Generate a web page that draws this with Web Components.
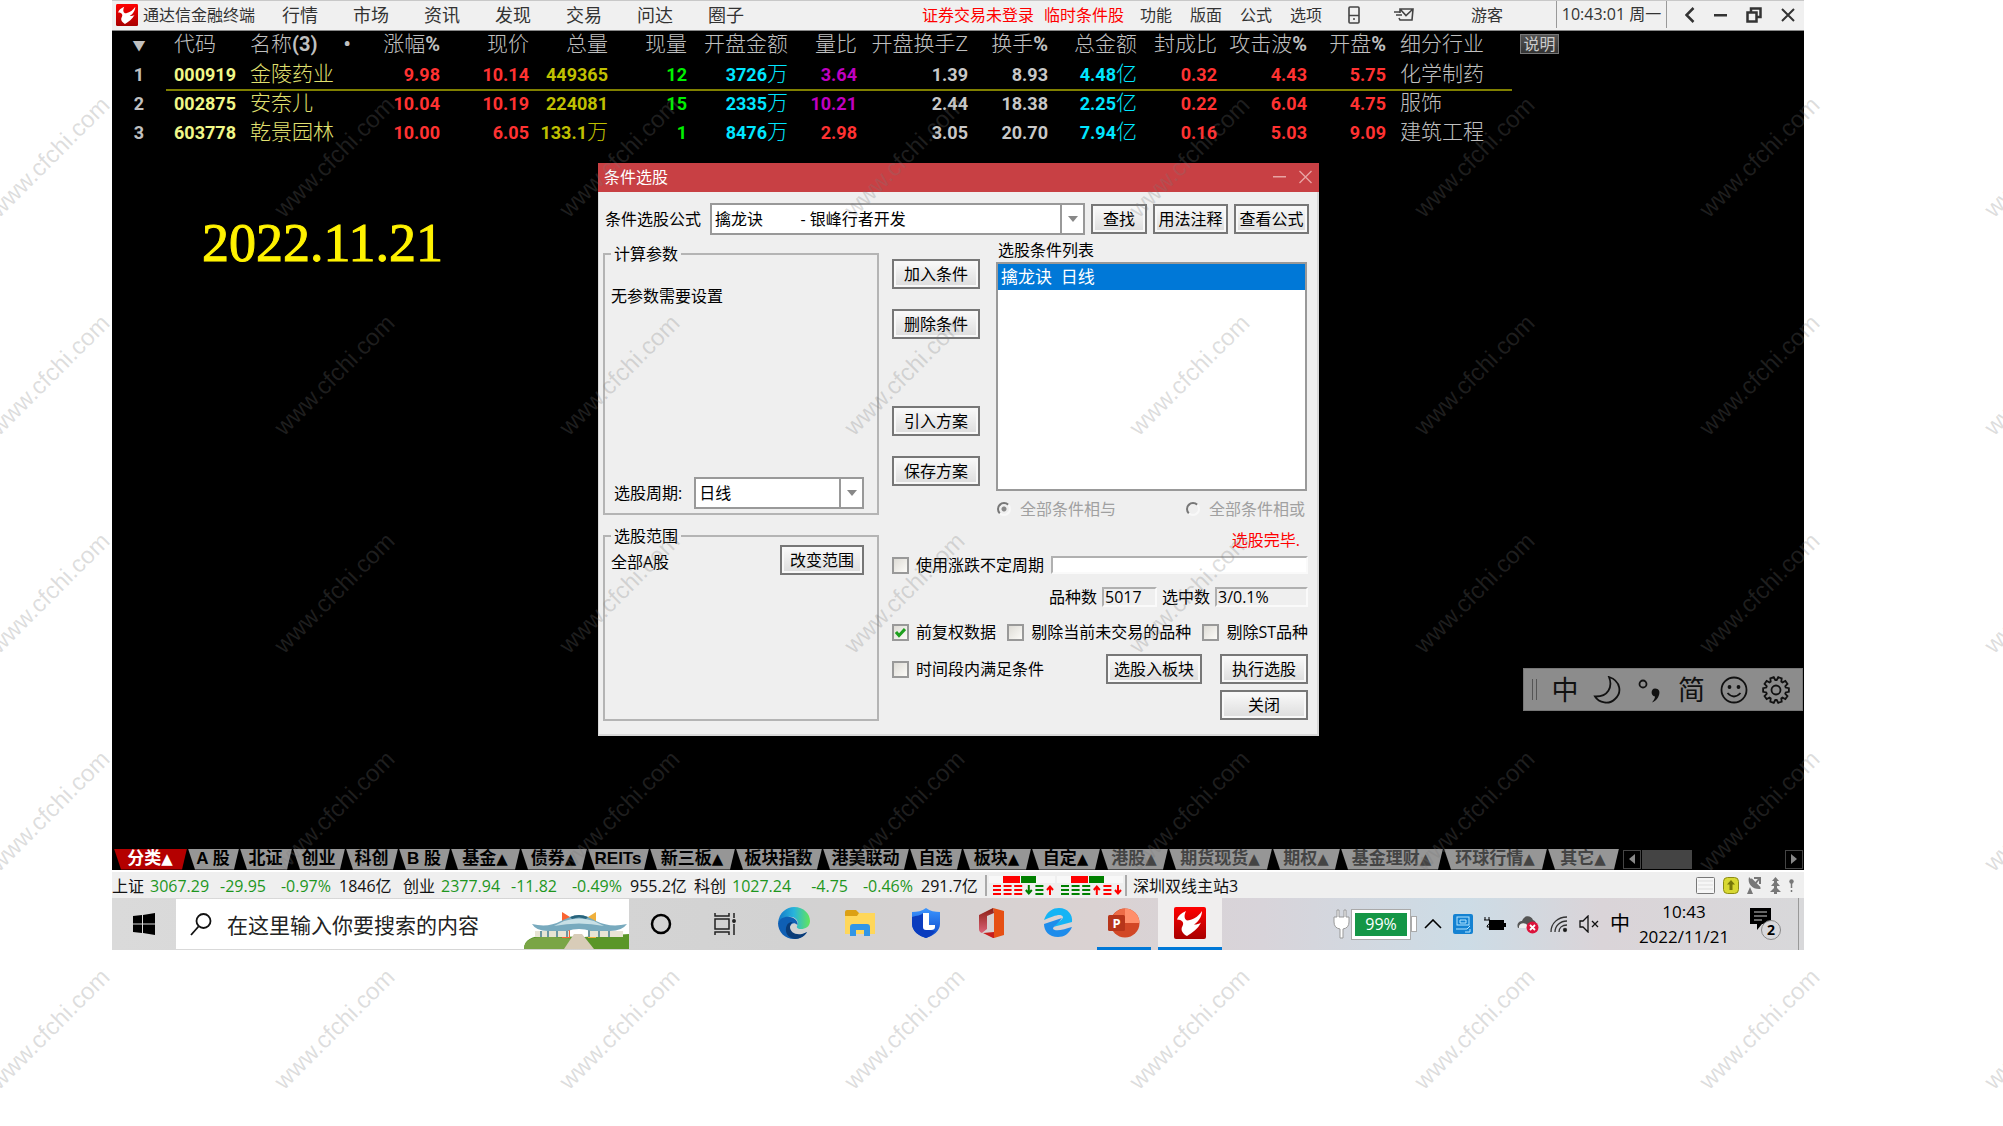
<!DOCTYPE html>
<html lang="zh-CN">
<head>
<meta charset="utf-8">
<title>通达信金融终端</title>
<style>
    html, body {
        margin: 0;
        background: #fff;
    }

    body {
        --ui: "Open Sans", "Noto Sans CJK SC", sans-serif;
        --num: Roboto, "Noto Sans CJK SC", sans-serif;
        position: relative;
        min-height: 100vh;
        overflow: hidden;
        font: 16px/20px var(--ui);
        color: #111;
    }
</style>
</head>
<body>
<desk-top>
    <app-menu></app-menu>
    <work-area>
        <quote-table></quote-table>
        <date-note>2022.11.21</date-note>
        <pick-dialog></pick-dialog>
        <ime-bar></ime-bar>
    </work-area>
    <sector-tabs></sector-tabs>
    <index-bar></index-bar>
    <task-bar></task-bar>
</desk-top>
<water-mark text="www.cfchi.com"></water-mark>

<script>
const logo = `
    <svg viewBox="0 0 32 32">
        <defs><linearGradient id="r" x2="0" y2="1"><stop stop-color="#f00"/><stop offset="1" stop-color="#a80000"/></linearGradient></defs>
        <rect width="32" height="32" rx="2" fill="url(#r)"/>
        <path d="M3 12.500C4 9 7 6 12 4C10 8 10 12 13 13.500C18 13.500 24 10 28 4C28 10 24 15 20 17.500C23 17.500 25 17 27 15.500C24 22 18 26 13 29C9 27 6 23 8.500 19C10.500 15.500 8 12.500 3 12.500Z" fill="#fff"/>
    </svg>`;

class DeskTop extends HTMLElement {
    constructor() {
        super();
        this.attachShadow({ mode: 'open' });
        this.shadowRoot.innerHTML = `
            <style>
                :host {
                    display: flex;
                    flex-direction: column;
                    height: 950px;
                    margin: 0 199px 0 112px;
                    background: #000;
                }
            </style>
            <slot></slot>
        `;
    }
}

class WorkArea extends HTMLElement {
    constructor() {
        super();
        this.attachShadow({ mode: 'open' });
        this.shadowRoot.innerHTML = `
            <style>
                :host {
                    display: block;
                    position: relative;
                    flex: 1;
                    background: #000;
                }
                ::slotted(date-note) { position: absolute; left: 90px; top: 185px; }
                ::slotted(pick-dialog) { position: absolute; left: 486px; top: 132px; }
                ::slotted(ime-bar) { position: absolute; right: 1px; top: 637px; }
            </style>
            <slot></slot>
        `;
    }
}

class DateNote extends HTMLElement {
    constructor() {
        super();
        this.attachShadow({ mode: 'open' });
        this.shadowRoot.innerHTML = `
            <style>
                :host {
                    display: block;
                    font: 54px/54px "Liberation Serif", serif;
                    color: #fff200;
                    -webkit-text-stroke: 1px #fff200;
                }
            </style>
            <slot></slot>
        `;
    }
}

class AppMenu extends HTMLElement {
    constructor() {
        super();
        this.attachShadow({ mode: 'open' });
    }

    connectedCallback() {
        const menus = ['行情', '市场', '资讯', '发现', '交易', '问达', '圈子'];
        const tools = ['功能', '版面', '公式', '选项'];

        this.shadowRoot.innerHTML = `
            <style>
                :host {
                    display: flex;
                    align-items: center;
                    box-sizing: border-box;
                    height: 31px;
                    padding-bottom: 2px;
                    border-top: 1px solid #c8c8c8;
                    border-bottom: 1px solid #888;
                    background: #f0f0f0;
                    color: #333;
                    white-space: nowrap;
                }
                button {
                    padding: 0;
                    border: 0;
                    background: none;
                    font: inherit;
                    color: inherit;
                }
                svg { display: block; }
                .brand { display: flex; align-items: center; gap: 5px; margin-left: 4px; }
                .brand svg { width: 22px; height: 22px; }
                .menus { display: flex; gap: 35px; margin-left: 27px; font-size: 18px; }
                .right { display: flex; align-items: center; margin-left: auto; }
                .red { color: #f00; margin-right: 10px; }
                .tools { display: flex; gap: 18px; margin: 0 26px 0 6px; }
                .guest { margin: 0 53px 0 57px; }
                .clock {
                    width: 109px;
                    height: 27px;
                    line-height: 27px;
                    text-align: center;
                    border: solid #999;
                    border-width: 0 1px;
                }
                .win { display: flex; align-items: center; gap: 19px; margin: 0 9px 0 18px; }
            </style>
            <div class="brand">${logo}<span>通达信金融终端</span></div>
            <nav class="menus">${menus.map(m => `<button>${m}</button>`).join('')}</nav>
            <div class="right">
                <button class="red">证券交易未登录</button>
                <button class="red">临时条件股</button>
                <div class="tools">${tools.map(t => `<button>${t}</button>`).join('')}</div>
                <button aria-label="手机"><svg width="12" height="18" viewBox="0 0 12 18" fill="none" stroke="#444" stroke-width="1.600"><rect x="1" y="1" width="10" height="16" rx="1"/><path d="M1 9.500H11M5 13H7"/></svg></button>
                <button aria-label="邮件" style="margin-left: 34px"><svg width="20" height="14" viewBox="0 0 20 14" fill="none" stroke="#444" stroke-width="1.600"><path d="M6 5V1H19L18 12H6L5 10M6 1 12 7.500 19 1M0 4H6M2 7H8"/></svg></button>
                <button class="guest">游客</button>
                <div class="clock">10:43:01 周一</div>
                <div class="win">
                    <button aria-label="返回"><svg width="10" height="16" viewBox="0 0 10 16" fill="none" stroke="#333" stroke-width="2.500"><path d="M8.500 1 1.500 8 8.500 15"/></svg></button>
                    <button aria-label="最小化"><svg width="13" height="16" viewBox="0 0 13 16"><path d="M0 7H13V9.500H0Z" fill="#333"/></svg></button>
                    <button aria-label="还原"><svg width="16" height="16" viewBox="0 0 16 16" fill="none" stroke="#333" stroke-width="2.500"><path d="M5 5V1.500H14.500V10H11M1.500 5.500H10.500V14.500H1.500Z"/></svg></button>
                    <button aria-label="关闭"><svg width="14" height="16" viewBox="0 0 14 16" fill="none" stroke="#333" stroke-width="2"><path d="M1 2 13 14M13 2 1 14"/></svg></button>
                </div>
            </div>
        `;
    }
}

const quoteCols = [
    { head: '<span class="arrow">▼</span>', w: 54, cls: 'idx' },
    { head: '代码', w: 76, cls: 'code' },
    { head: '名称<b>(3)</b><b class="dot">•</b>', w: 118, cls: 'name' },
    { head: '涨幅<b>%</b>', w: 80 },
    { head: '现价', w: 89 },
    { head: '总量', w: 79 },
    { head: '现量', w: 79 },
    { head: '开盘金额', w: 101 },
    { head: '量比', w: 69 },
    { head: '开盘换手Z', w: 111 },
    { head: '换手<b>%</b>', w: 80 },
    { head: '总金额', w: 89 },
    { head: '封成比', w: 80 },
    { head: '攻击波<b>%</b>', w: 90 },
    { head: '开盘<b>%</b>', w: 79 },
    { head: '细分行业', w: 126, cls: 'trade' },
];

const quoteColors = ['#c0c0c0', '#f0f888', '#e0e070', '#ff3232', '#ff3232', '#c0c000', '#00f000', '#00e6ff',
    '#c000c0', '#c8c8c8', '#c8c8c8', '#00e6ff', '#ff3232', '#ff3232', '#ff3232', '#c0c0c0'];

const quotes = [
    ['1', '000919', '金陵药业', '9.98', '10.14', '449365', '12', '3726万', '3.64', '1.39', '8.93', '4.48亿', '0.32', '4.43', '5.75', '化学制药'],
    ['2', '002875', '安奈儿', '10.04', '10.19', '224081', '15', '2335万', '10.21', '2.44', '18.38', '2.25亿', '0.22', '6.04', '4.75', '服饰'],
    ['3', '603778', '乾景园林', '10.00', '6.05', '133.1万', '1', '8476万', '2.98', '3.05', '20.70', '7.94亿', '0.16', '5.03', '9.09', '建筑工程'],
];

class QuoteTable extends HTMLElement {
    constructor() {
        super();
        this.attachShadow({ mode: 'open' });
    }

    cell(text, col, row) {
        // the last row's volume ratio is red, the others purple
        const color = col === 8 && row === 2 ? '#ff3232' : quoteColors[col];
        const html = text.replace(/[\u4e00-\u9fff]+/g, m => `<i>${m}</i>`);
        return `<td class="${quoteCols[col].cls || ''}" style="color: ${color}">${html}</td>`;
    }

    connectedCallback() {
        this.shadowRoot.innerHTML = `
            <style>
                :host { display: flex; align-items: flex-start; gap: 8px; }
                table {
                    width: 1400px;
                    table-layout: fixed;
                    border-collapse: collapse;
                    color: #c0c0c0;
                    white-space: nowrap;
                }
                th, td {
                    height: 25px;
                    padding: 0 0 2px;
                    border-bottom: 2px solid transparent;
                    text-align: right;
                    font-family: var(--num);
                    line-height: 25px;
                }
                th { font-size: 21px; font-weight: 300; }
                th b { font-size: 20px; font-weight: 700; }
                td { font-size: 18px; font-weight: 700; }
                i { font-size: 21px; font-style: normal; font-weight: 300; }
                .idx { text-align: center; }
                .code, .name { text-align: left; padding-left: 8px; }
                .trade { text-align: left; padding-left: 14px; }
                .arrow { font-size: 13px; }
                .dot { margin-left: 26px; }
                tbody tr:first-child td:not(.idx) { border-bottom-color: #808000; }
                button {
                    width: 39px;
                    height: 20px;
                    margin-top: 3px;
                    padding: 0;
                    border: 1px solid #777;
                    background: linear-gradient(#555, #333);
                    font: 16px/16px var(--ui);
                    color: #ccc;
                }
            </style>
            <table>
                <colgroup>${quoteCols.map(c => `<col style="width: ${c.w}px">`).join('')}</colgroup>
                <thead><tr>${quoteCols.map(c => `<th class="${c.cls || ''}">${c.head}</th>`).join('')}</tr></thead>
                <tbody>${quotes.map((q, r) => `<tr>${q.map((t, c) => this.cell(t, c, r)).join('')}</tr>`).join('')}</tbody>
            </table>
            <button>说明</button>
        `;
    }
}

class PushButton extends HTMLElement {
    constructor() {
        super();
        this.attachShadow({ mode: 'open' });
        this.shadowRoot.innerHTML = `
            <style>
                :host { display: block; width: 88px; height: 30px; }
                button {
                    width: 100%;
                    height: 100%;
                    padding: 0;
                    border: 2px solid #777;
                    box-shadow: inset 0 0 0 2px #f8f8f8;
                    background: linear-gradient(#fafafa, #dcdcdc);
                    font: 16px/20px var(--ui);
                    color: #000;
                    white-space: nowrap;
                }
            </style>
            <button><slot></slot></button>
        `;
    }
}

class GroupBox extends HTMLElement {
    constructor() {
        super();
        this.attachShadow({ mode: 'open' });
    }

    connectedCallback() {
        this.shadowRoot.innerHTML = `
            <style>
                :host { display: flex; }
                fieldset {
                    display: flex;
                    flex-direction: column;
                    flex: 1;
                    min-width: 0;
                    margin: 0;
                    padding: 0 13px 4px 6px;
                    border: 2px solid #b4b4b4;
                }
                legend { padding: 0 3px; line-height: 22px; }
            </style>
            <fieldset>
                <legend>${this.getAttribute('label')}</legend>
                <slot></slot>
            </fieldset>
        `;
    }
}

class PickDialog extends HTMLElement {
    constructor() {
        super();
        this.attachShadow({ mode: 'open' });
    }

    connectedCallback() {
        this.shadowRoot.innerHTML = `
            <style>
                :host {
                    display: block;
                    box-sizing: border-box;
                    width: 721px;
                    height: 573px;
                    border: solid #d8d8d8;
                    border-width: 0 2px 2px 1px;
                    background: #efefef;
                    color: #000;
                    white-space: nowrap;
                }
                header {
                    display: flex;
                    align-items: center;
                    box-sizing: border-box;
                    height: 29px;
                    margin: 0 -2px 0 -1px;
                    padding: 0 7px 2px 6px;
                    background: #c84044;
                    color: #fff;
                }
                header span { margin-right: auto; }
                header button { padding: 0; border: 0; background: none; }
                header button:last-child { margin-left: 13px; }
                header svg { display: block; }
                .row { display: flex; align-items: center; }
                .formula { margin-top: 11px; padding: 0 8px 0 6px; gap: 6px; }
                .formula label { width: 99px; }
                .formula push-button { width: 75px; }
                .formula .find { width: 56px; }
                .combo { position: relative; display: flex; flex: 1; }
                select {
                    appearance: none;
                    flex: 1;
                    height: 32px;
                    padding: 0 3px;
                    border: 2px solid #999;
                    border-radius: 0;
                    background: #fff;
                    font: 16px/20px var(--ui);
                    color: #000;
                }
                .combo span {
                    position: absolute;
                    right: 2px;
                    top: 2px;
                    bottom: 2px;
                    width: 21px;
                    display: flex;
                    align-items: center;
                    justify-content: center;
                    border-left: 2px solid #999;
                    pointer-events: none;
                }
                .body { display: flex; gap: 13px; margin-top: 5px; padding: 0 9px 0 4px; }
                .left { display: flex; flex-direction: column; gap: 10px; width: 276px; padding-top: 3px; }
                .params { height: 272px; }
                .params p { margin: 20px 0 auto; line-height: 22px; }
                .period { padding-left: 3px; gap: 12px; }
                .scope { height: 196px; }
                .scope .row { justify-content: space-between; align-items: flex-start; margin-top: -2px; }
                .scope push-button { width: 84px; }
                .scope .row span { margin-top: 7px; }
                .right { flex: 1; min-width: 0; }
                .top { display: flex; gap: 16px; height: 287px; }
                .acts { display: flex; flex-direction: column; gap: 20px; padding-top: 19px; }
                .acts push-button:nth-child(3) { margin-top: 47px; }
                .list { flex: 1; }
                .list > label { display: block; line-height: 20px; padding: 0 0 2px 2px; }
                ul {
                    box-sizing: border-box;
                    height: 229px;
                    margin: 0 1px 0 0;
                    padding: 0;
                    border: 2px solid #999;
                    background: #fff;
                    list-style: none;
                    font-size: 17px;
                }
                li { padding: 0 3px; line-height: 26px; background: #0078d7; color: #fff; white-space: pre; }
                .modes { justify-content: space-between; height: 36px; padding-right: 3px; color: #a0a0a0; }
                .modes label, .check { display: flex; align-items: center; }
                input[type=radio] {
                    appearance: none;
                    width: 14px;
                    height: 14px;
                    margin: 0 9px 0 1px;
                    border: 2px solid;
                    border-color: #777 #f8f8f8 #f8f8f8 #777;
                    border-radius: 50%;
                }
                input[type=radio]:checked { background: radial-gradient(circle, #888 2px, transparent 3px); }
                .done { height: 26px; line-height: 26px; text-align: right; padding-right: 8px; color: #f00; }
                input[type=checkbox] {
                    appearance: none;
                    box-sizing: border-box;
                    width: 17px;
                    height: 17px;
                    margin: 0 7px 0 0;
                    border: 2px solid #999;
                    background: linear-gradient(135deg, #dedcd6, #fcfbf8);
                }
                .check { position: relative; }
                .check svg { position: absolute; left: 3px; top: 6px; }
                .cycle { height: 24px; gap: 7px; }
                .cycle input[type=text] { flex: 1; min-width: 0; height: 18px; }
                input[type=text], output {
                    box-sizing: border-box;
                    padding: 0 1px;
                    border: 2px solid;
                    border-color: #b0b0b0 #fafafa #fafafa #b0b0b0;
                    background: #fff;
                    font: 16px/16px var(--ui);
                }
                output { display: block; width: 55px; height: 20px; background: none; }
                .counts { height: 40px; justify-content: flex-end; gap: 5px; }
                .counts output:last-child { width: 93px; }
                .flags { justify-content: space-between; height: 30px; }
                .runs { margin-top: 7px; gap: 18px; }
                .runs .check { margin-right: auto; }
                .runs .block { width: 96px; }
                .close { margin-top: 6px; justify-content: flex-end; }
            </style>
            <header>
                <span>条件选股</span>
                <button aria-label="最小化"><svg width="13" height="14" viewBox="0 0 13 14"><path d="M0 6H13V7.500H0Z" fill="#e8a4a4"/></svg></button>
                <button aria-label="关闭"><svg width="13" height="14" viewBox="0 0 13 14" fill="none" stroke="#e8a4a4" stroke-width="1.400"><path d="M0.500 1 12.500 13M12.500 1 0.500 13"/></svg></button>
            </header>
            <div class="row formula">
                <label for="formula">条件选股公式</label>
                <div class="combo">
                    <select id="formula"><option>擒龙诀&nbsp;&nbsp;&nbsp;&nbsp;&nbsp;&nbsp;&nbsp;&nbsp;&nbsp;- 银峰行者开发</option></select>
                    <span><svg width="10" height="6" viewBox="0 0 10 6"><path d="M0 0H10L5 6Z" fill="#888"/></svg></span>
                </div>
                <push-button class="find">查找</push-button>
                <push-button>用法注释</push-button>
                <push-button>查看公式</push-button>
            </div>
            <div class="body">
                <div class="left">
                    <group-box class="params" label="计算参数">
                        <p>无参数需要设置</p>
                        <div class="row period">
                            <label for="period">选股周期:</label>
                            <div class="combo">
                                <select id="period"><option>日线</option></select>
                                <span><svg width="10" height="6" viewBox="0 0 10 6"><path d="M0 0H10L5 6Z" fill="#888"/></svg></span>
                            </div>
                        </div>
                    </group-box>
                    <group-box class="scope" label="选股范围">
                        <div class="row"><span>全部A股</span><push-button>改变范围</push-button></div>
                    </group-box>
                </div>
                <div class="right">
                    <div class="top">
                        <div class="acts">
                            <push-button>加入条件</push-button>
                            <push-button>删除条件</push-button>
                            <push-button>引入方案</push-button>
                            <push-button>保存方案</push-button>
                        </div>
                        <div class="list">
                            <label id="conds">选股条件列表</label>
                            <ul aria-labelledby="conds"><li>擒龙诀  日线</li></ul>
                            <div class="row modes">
                                <label><input type="radio" name="mode" checked disabled>全部条件相与</label>
                                <label><input type="radio" name="mode" disabled>全部条件相或</label>
                            </div>
                        </div>
                    </div>
                    <div class="done">选股完毕.</div>
                    <div class="row cycle">
                        <label class="check"><input type="checkbox">使用涨跌不定周期</label>
                        <input type="text" aria-label="周期">
                    </div>
                    <div class="row counts">
                        <label for="total">品种数</label><output id="total">5017</output>
                        <label for="hit">选中数</label><output id="hit">3/0.1%</output>
                    </div>
                    <div class="row flags">
                        <label class="check"><input type="checkbox" checked>前复权数据<svg width="11" height="10" viewBox="0 0 11 10" fill="none" stroke="#1ea01e" stroke-width="3"><path d="M1 4 4 7.500 10 1"/></svg></label>
                        <label class="check"><input type="checkbox">剔除当前未交易的品种</label>
                        <label class="check"><input type="checkbox">剔除ST品种</label>
                    </div>
                    <div class="row runs">
                        <label class="check"><input type="checkbox">时间段内满足条件</label>
                        <push-button class="block">选股入板块</push-button>
                        <push-button>执行选股</push-button>
                    </div>
                    <div class="row close"><push-button>关闭</push-button></div>
                </div>
            </div>
        `;
    }
}

class ImeBar extends HTMLElement {
    constructor() {
        super();
        this.attachShadow({ mode: 'open' });
    }

    gear() {
        let d = '';
        for (let i = 0; i < 10; i++) {
            [[-14, 10], [-8, 13], [8, 13], [14, 10]].forEach(([da, r]) => {
                const a = (i * 36 + 18 + da) * Math.PI / 180;
                d += `${d ? 'L' : 'M'}${(14 + r * Math.sin(a)).toFixed(2)} ${(14 - r * Math.cos(a)).toFixed(2)}`;
            });
        }
        return `<path d="${d}Z"/><circle cx="14" cy="14" r="4.500"/>`;
    }

    connectedCallback() {
        this.shadowRoot.innerHTML = `
            <style>
                :host {
                    display: flex;
                    align-items: center;
                    box-sizing: border-box;
                    width: 280px;
                    height: 43px;
                    padding: 0 5px 0 8px;
                    border: 1px solid #777;
                    background: #8c8c8c;
                    color: #111;
                }
                .grip { width: 3px; height: 21px; margin-right: 7px; border: solid #555; border-width: 0 1px; }
                button {
                    flex: 1;
                    display: flex;
                    justify-content: center;
                    padding: 0;
                    border: 0;
                    background: none;
                    font: 27px/30px var(--ui);
                    color: inherit;
                }
                svg { fill: none; stroke: #111; stroke-width: 1.800; }
            </style>
            <span class="grip"></span>
            <button>中</button>
            <button aria-label="半角"><svg width="28" height="28" viewBox="0 0 28 28"><path d="M16 1C28 5 29 17 22 23C16 29 6 27 2 20.500C15 21 20 11 16 1Z"/></svg></button>
            <button aria-label="标点"><svg width="28" height="28" viewBox="0 0 28 28"><circle cx="8" cy="8" r="3.500"/><path d="M20 12.500C25 12.500 25.500 17 23 21.500C21.500 24 19 26 17 26.500C18.500 24.500 20 22.500 20 20.500C15.500 20 15.500 12.500 20 12.500Z" fill="#111" stroke="none"/></svg></button>
            <button>简</button>
            <button aria-label="表情"><svg width="28" height="28" viewBox="0 0 28 28"><circle cx="14" cy="14" r="12.500"/><path d="M7.500 17Q14 24 20.500 17"/><circle cx="9.500" cy="11" r="1" fill="#111"/><circle cx="18.500" cy="11" r="1" fill="#111"/></svg></button>
            <button aria-label="设置"><svg width="28" height="28" viewBox="0 0 28 28">${this.gear()}</svg></button>
        `;
    }
}

const sectors = [
    ['分类▲', 74, 'on'], ['A 股', 52], ['北证', 53], ['创业', 53], ['科创', 53], ['B 股', 52], ['基金▲', 70],
    ['债券▲', 67], ['REITs', 62], ['新三板▲', 86], ['板块指数', 87], ['港美联动', 87], ['自选', 53],
    ['板块▲', 69], ['自定▲', 69], ['港股▲', 68, 'dim'], ['期货现货▲', 104, 'dim'], ['期权▲', 68, 'dim'],
    ['基金理财▲', 103, 'dim'], ['环球行情▲', 104, 'dim'], ['其它▲', 72, 'dim'],
];

class SectorTabs extends HTMLElement {
    constructor() {
        super();
        this.attachShadow({ mode: 'open' });
    }

    connectedCallback() {
        this.shadowRoot.innerHTML = `
            <style>
                :host { display: flex; align-items: center; height: 22px; padding-left: 2px; background: #000; }
                .tab {
                    flex: none;
                    height: 21px;
                    padding: 0 2px 0 0;
                    border: 0;
                    background: #969696;
                    clip-path: polygon(0 0, calc(100% - 1px) 0, calc(100% - 6px) 100%, 7px 100%);
                    font: 700 17px/20px "Liberation Sans", "Noto Sans CJK SC", sans-serif;
                    color: #000;
                    white-space: nowrap;
                }
                .tab span { font-family: "DejaVu Sans", sans-serif; font-size: 15px; }
                .on { background: #b40000; color: #fff; }
                .dim { color: #444; }
                .scroll { display: flex; flex: 1; height: 19px; margin: 0 1px 0 3px; }
                .scroll button {
                    width: 18px;
                    padding: 0;
                    border: 1px solid #444;
                    background: #000;
                }
                .scroll svg { display: block; margin: auto; }
                .thumb { width: 50px; margin: 0 auto 0 1px; background: #444; }
            </style>
            ${sectors.map(([t, w, c]) => `<button class="tab ${c || ''}" style="width: ${w}px">${t.replace('▲', '<span>▲</span>')}</button>`).join('')}
            <div class="scroll">
                <button aria-label="向左"><svg width="6" height="10"><path d="M6 0V10L0 5Z" fill="#888"/></svg></button>
                <div class="thumb"></div>
                <button aria-label="向右"><svg width="6" height="10"><path d="M0 0V10L6 5Z" fill="#888"/></svg></button>
            </div>
        `;
    }
}

const indexes = [
    ['上证', '3067.29', '-29.95', '-0.97%', '1846亿'],
    ['创业', '2377.94', '-11.82', '-0.49%', '955.2亿'],
    ['科创', '1027.24', '-4.75', '-0.46%', '291.7亿'],
];

class IndexBar extends HTMLElement {
    constructor() {
        super();
        this.attachShadow({ mode: 'open' });
    }

    // marks: r/g for the colour, then = (flat), u (up) or d (down)
    lamps(marks) {
        const shapes = {
            '=': 'M0 1H8M0 5H8M0 9H8',
            'u': 'M4 10V3M1 5 4 1.500 7 5',
            'd': 'M4 0V7M1 5 4 8.500 7 5',
        };
        return `
            <svg width="66" height="20" viewBox="0 0 66 20" fill="none" stroke-width="2">
                <path d="M0 0H66V7H0Z" fill="#f8f8f8"/>
                <path d="M14 0H31V7H14Z" fill="#f00"/><path d="M32 0H47V7H32Z" fill="#008000"/>
                ${marks.map((m, i) => `<path transform="translate(${4 + i * 10.6} 9)" stroke="${m[0] === 'r' ? '#f00' : '#008000'}" d="${shapes[m[1]]}"/>`).join('')}
            </svg>`;
    }

    connectedCallback() {
        this.shadowRoot.innerHTML = `
            <style>
                :host {
                    display: flex;
                    align-items: center;
                    box-sizing: border-box;
                    height: 28px;
                    padding-top: 1px;
                    border-top: 2px solid #fff;
                    background: #efefef;
                    white-space: nowrap;
                }
                .index { display: grid; grid-template-columns: 38px 58px 58px 65px 72px; }
                .index span:nth-child(n+2):nth-child(-n+4) { color: #1e961e; text-align: right; }
                .index span:last-child { padding-left: 8px; }
                .lamps { display: flex; gap: 2px; padding: 1px 2px 0; border: solid #aaa; border-width: 0 2px; }
                .host { margin: 0 auto 0 6px; }
                .icons { display: flex; align-items: center; gap: 8px; margin-right: 10px; }
            </style>
            ${indexes.map(x => `<div class="index">${x.map(t => `<span>${t}</span>`).join('')}</div>`).join('')}
            <div class="lamps">
                ${this.lamps(['r=', 'r=', 'r=', 'gd', 'g=', 'ru'])}
                ${this.lamps(['g=', 'g=', 'g=', 'ru', 'r=', 'rd'])}
            </div>
            <span class="host">深圳双线主站3</span>
            <div class="icons">
                <svg width="19" height="17" viewBox="0 0 19 17"><rect x="0.500" y="0.500" width="18" height="16" rx="1" fill="#f6f6f6" stroke="#777"/><path d="M2 4H17M2 8H17M2 12H17" stroke="#ddd"/></svg>
                <svg width="16" height="17" viewBox="0 0 16 17"><rect x="0.500" y="0.500" width="15" height="16" rx="4" fill="#d8d832" stroke="#8c8c14"/><path d="M8 3 12 7.500H9.500V13H6.500V7.500H4Z" fill="#77770a"/></svg>
                <svg width="15" height="17" viewBox="0 0 15 17"><path d="M2 0C0 7 6 13 14 12L9 7ZM0 17 3 10 6 17Z" fill="#777"/><path d="M4 2 13 11M8 7 12 2M7 1H13V7" stroke="#777" stroke-width="2" fill="none"/></svg>
                <svg width="11" height="17" viewBox="0 0 11 17"><path d="M5.500 0 9 4H7V5.500L10 9H7V11L11 15H7V17H4V15H0L4 11V9H1L4 5.500V4H2Z" fill="#777"/></svg>
                <svg width="5" height="13" viewBox="0 0 5 13"><circle cx="2.500" cy="2.500" r="2.200" fill="#777"/><path d="M2.500 3V9M2.500 11V13" stroke="#777" stroke-width="1.500"/></svg>
            </div>
        `;
    }
}

class TaskBar extends HTMLElement {
    constructor() {
        super();
        this.attachShadow({ mode: 'open' });
    }

    connectedCallback() {
        this.shadowRoot.innerHTML = `
            <style>
                :host {
                    display: flex;
                    align-items: stretch;
                    height: 52px;
                    background: linear-gradient(90deg, #dadada, #d2d2d2 40%, #dad2d2 58%, #d8d4da 68%, #ccdce6 80%, #dad4d8 88%, #d8d8da);
                    color: #000;
                }
                button {
                    display: flex;
                    align-items: center;
                    justify-content: center;
                    padding: 0;
                    border: 0;
                    background: none;
                    font: inherit;
                    color: inherit;
                }
                svg { display: block; flex: none; }
                .start { width: 64px; }
                .search {
                    display: flex;
                    align-items: center;
                    width: 453px;
                    margin: 1px 0;
                    background: #fff;
                }
                .search > svg:first-child { margin: 0 15px 0 14px; }
                .search input {
                    flex: 1;
                    min-width: 0;
                    padding: 2px 0 0;
                    border: 0;
                    background: none;
                    font: 21px/30px var(--ui);
                }
                .search input::placeholder { color: #222; opacity: 1; }
                .scene { align-self: flex-end; }
                .app { width: 66px; border-bottom: 3px solid transparent; box-sizing: border-box; }
                .app:nth-of-type(4) { margin-left: 4px; }
                .plain { width: 64px; }
                .open { width: 54px; margin: 0 7px 0 6px; border-bottom-color: #0078d7; }
                .active { width: 64px; border-bottom-color: #0078d7; background: #f0eeee; }
                .tray { display: flex; align-items: center; margin-left: auto; }
                .power { display: flex; align-items: center; gap: 2px; margin-right: 8px; }
                .level {
                    width: 52px;
                    height: 23px;
                    border: 3px solid #fff;
                    outline: 1px solid #aaa;
                    background: #149646;
                    line-height: 23px;
                    text-align: center;
                    color: #fff;
                }
                .tip { width: 4px; height: 14px; background: #fff; outline: 1px solid #aaa; }
                .icons { display: flex; align-items: center; gap: 11px; }
                .icons button { font-size: 20px; }
                .time { width: 108px; flex-direction: column; font-size: 17px; line-height: 25px; }
                .note { width: 32px; margin: 0 16px 0 12px; }
                .show { width: 5px; border-left: 1px solid #999; }
            </style>
            <button class="start" aria-label="开始"><svg width="22" height="22" viewBox="0 0 22 22"><path d="M0 3 9 2V10.500H0ZM10 2 22 0V10.500H10ZM0 11.500H9V20L0 19ZM10 11.500H22V22L10 20Z"/></svg></button>
            <div class="search">
                <svg width="22" height="23" viewBox="0 0 22 23" fill="none" stroke="#111" stroke-width="1.800"><circle cx="13.500" cy="8" r="7"/><path d="M8.500 13.500 1 22"/></svg>
                <input type="text" placeholder="在这里输入你要搜索的内容" aria-label="搜索">
                <svg class="scene" width="105" height="37" viewBox="0 0 105 37">
                    <path d="M0 37C0 27 10 23 25 24L60 25 105 22V37Z" fill="#5a9628"/>
                    <path d="M0 37C0 27 10 24 30 25L52 27 42 37Z" fill="#7aa546"/>
                    <path d="M50 22H58L70 37H40Z" fill="#d8ccb8"/>
                    <path d="M38 0 46 5V26H38Z" fill="#fa6432"/><path d="M72 0 64 5V26H72Z" fill="#f0b03c"/>
                    <path d="M11 19H45V25H11ZM65 19H99V25H65Z" fill="#e8e4d4"/>
                    <path d="M17 19V25M24 19V25M33 19V25M43 18V25M65 18V25M75 19V25M85 19V25" stroke="#6e96a0" stroke-width="2"/>
                    <path d="M46 5Q55 1 64 5L72 9Q86 16 103 12Q98 19 86 19H67Q55 15 43 19H24Q12 19 8 12Q24 16 37 9Z" fill="#78aabe"/>
                    <path d="M40 9Q55 4 70 9L80 14Q55 9 30 14Z" fill="#c8e0e6"/>
                    <path d="M46 5Q55 1 64 5L62 7Q55 4 48 7Z" fill="#28647c"/>
                </svg>
            </div>
            <button class="plain" aria-label="Cortana"><svg width="22" height="22" viewBox="0 0 22 22" fill="none" stroke="#000" stroke-width="2.500"><circle cx="11" cy="11" r="9"/></svg></button>
            <button class="plain" aria-label="任务视图"><svg width="22" height="22" viewBox="0 0 22 22" fill="none" stroke="#222" stroke-width="1.500"><path d="M1 0V3H15V0M1 22V19H15V22M1 6H15V16H1ZM20 0V5M20 11V22"/><circle cx="20" cy="8" r="1.200" fill="#222"/></svg></button>
            <button class="app" aria-label="Edge"><svg width="32" height="32" viewBox="0 0 32 32">
                <defs><linearGradient id="e1"><stop stop-color="#1478c8"/><stop offset="0.500" stop-color="#28b4dc"/><stop offset="1" stop-color="#64e65a"/></linearGradient></defs>
                <path d="M0 16C1 5 9 0 16 0C26 0 32 7 32 14C32 20 27 22 23 22C19 22 18 20 19.500 18C21 12 15 9 10 10C5 11 1 14 0 16Z" fill="url(#e1)"/>
                <path d="M0 16C2 11 7 9 12 10C18 11 20 15 19.500 18C15 14 11 18 12 23C13 28 20 31 29 25C25 31 20 32 16 32C7 32 0 25 0 16Z" fill="#0f5fb4"/>
                <path d="M9 18C6 24 9 31 17 32C22 32 27 29 29 25C20 30 12 26 12 20C12 18 13 16 15 15C12 15 10 16 9 18Z" fill="#0a3c78"/></svg></button>
            <button class="app" aria-label="文件资源管理器"><svg width="30" height="26" viewBox="0 0 30 26"><path d="M0 2Q0 0 2 0H11L14 3H28V9H0Z" fill="#dca014"/><path d="M0 6H12L14 3H30V24H0Z" fill="#ffd75a"/><path d="M5 26V17Q5 14 8 14H22Q25 14 25 17V26H19V20H11V26Z" fill="#3296e6"/></svg></button>
            <button class="app" aria-label="电脑管家"><svg width="30" height="32" viewBox="0 0 30 32"><defs><linearGradient id="s1" x2="0" y2="1"><stop stop-color="#3c96ff"/><stop offset="1" stop-color="#0a46c8"/></linearGradient></defs><path d="M15 1C19 4 24 5 29 5V17C29 24 22 29 15 31C8 29 1 24 1 17V5C6 5 11 4 15 1Z" fill="url(#s1)"/><path d="M1 10C6 8 10 9 12 6V22L24 24C21 28 18 30 15 31C8 29 1 24 1 17Z" fill="#0a3cbe"/><path d="M12 6H18V18H24V20Q24 23 20 23H15Q12 23 12 20Z" fill="#fff"/></svg></button>
            <button class="app" aria-label="Office"><svg width="26" height="32" viewBox="0 0 26 32"><defs><linearGradient id="o1" x2="0" y2="1"><stop stop-color="#8c1e14"/><stop offset="1" stop-color="#dc6478"/></linearGradient></defs><path d="M14 1 25 4V28L15 31V5Z" fill="#e65014"/><path d="M0 8 14 1 15 6 8 9V22L3 26Q0 25 0 22Z" fill="url(#o1)"/><path d="M4 26 15 25V31L14 31Z" fill="#c81e1e"/></svg></button>
            <button class="app" aria-label="浏览器"><svg width="30" height="31" viewBox="0 0 30 31"><path d="M1 13C4 4 10 1 16 1C25 1 30 8 29 15L10 20C15 14 20 13 20 10C18 6 11 9 1 13Z" fill="#14b4f5"/><path d="M29 20C26 27 21 30 15 30C6 30 1 24 1 17L19 11C15 17 10 19 10 22C13 25 22 22 29 20Z" fill="#1e8ceb"/></svg></button>
            <button class="app open" aria-label="PowerPoint"><svg width="32" height="30" viewBox="0 0 32 30"><circle cx="17" cy="15" r="14.500" fill="#d24726"/><path d="M17 0.500A14.500 14.500 0 0 1 31.500 15H17Z" fill="#ff8f6b"/><path d="M17 0.500V15H3A14.500 14.500 0 0 1 17 0.500Z" fill="#ed6c47"/><rect y="7" width="17" height="16" rx="1.500" fill="#b7351a"/><text x="8.500" y="20" font-family="Open Sans" font-size="13" font-weight="700" text-anchor="middle" fill="#fff">P</text></svg></button>
            <button class="app active" aria-label="通达信">${logo.replace('<svg', '<svg width="32" height="32"')}</button>
            <div class="tray">
                <div class="power">
                    <svg width="17" height="30" viewBox="0 0 17 30"><path d="M4 1H6V8H11V1H13V8H16V13Q16 19 10 20V29H7V20Q1 19 1 13V8H4Z" fill="#fff" stroke="#999"/></svg>
                    <div class="level">99%</div>
                    <div class="tip"></div>
                </div>
                <div class="icons">
                    <button aria-label="显示隐藏的图标"><svg width="18" height="10" viewBox="0 0 18 10" fill="none" stroke="#000" stroke-width="1.600"><path d="M1 9 9 1 17 9"/></svg></button>
                    <button aria-label="显卡"><svg width="20" height="20" viewBox="0 0 20 20"><rect width="20" height="20" rx="2" fill="#1482d2"/><rect x="4" y="3" width="12" height="8" fill="none" stroke="#b4e6ff"/><path d="M7 6H13V9H7ZM3 15H14L17 12M12 18H17V15" stroke="#b4e6ff" fill="none"/></svg></button>
                    <button aria-label="电源"><svg width="22" height="14" viewBox="0 0 22 14"><path d="M5 3H20V6H22V10H20V13H5Z"/><path d="M1 0V3M5 0V3M0 3H6V6Q3 8 3 10H5" fill="none" stroke="#000"/></svg></button>
                    <button aria-label="OneDrive"><svg width="22" height="19" viewBox="0 0 22 19"><path d="M1 13C-1 8 3 6 5 6C7 0 14 0 16 5C20 6 20 12 17 13Z" fill="#555"/><path d="M2 13C1 9 6 7 9 9L14 13Z" fill="#eee"/><circle cx="15.500" cy="12.500" r="6" fill="#dc143c"/><path d="M13 10 18 15M18 10 13 15" stroke="#fff" stroke-width="1.800"/></svg></button>
                    <button aria-label="网络"><svg width="18" height="17" viewBox="0 0 18 17" fill="none" stroke="#333" stroke-width="1.300"><path d="M1 16C1 7 8 1 17 1M5 16C5 10 10 5 17 5M9 16C9 12 12 9 17 9"/><circle cx="15" cy="14" r="1.500" fill="#000"/></svg></button>
                    <button aria-label="音量"><svg width="20" height="18" viewBox="0 0 20 18" fill="none" stroke="#111" stroke-width="1.300"><path d="M1 6H4L9 1V17L4 12H1ZM13 6 19 12M19 6 13 12"/></svg></button>
                    <button>中</button>
                </div>
                <button class="time"><span>10:43</span><span>2022/11/21</span></button>
                <button class="note" aria-label="通知"><svg width="32" height="34" viewBox="0 0 32 34"><path d="M0 1H21V17H12L7 23V17H0Z"/><path d="M4 5H17M4 9H17M4 13H12" stroke="#ccc"/><circle cx="21" cy="23" r="9.500" fill="#d8d8dc" stroke="#888"/><text x="21" y="28" font-family="Open Sans" font-size="14" font-weight="700" text-anchor="middle">2</text></svg></button>
            </div>
            <div class="show"></div>
        `;
    }
}

class WaterMark extends HTMLElement {
    constructor() {
        super();
        this.attachShadow({ mode: 'open' });
    }

    connectedCallback() {
        const marks = Array(40).fill(`<span>${this.getAttribute('text')}</span>`).join('');

        this.shadowRoot.innerHTML = `
            <style>
                :host { position: absolute; inset: 0; overflow: hidden; pointer-events: none; }
                div {
                    display: grid;
                    grid-template-columns: repeat(8, 285px);
                    grid-auto-rows: 218px;
                    place-items: center;
                    margin: 48px 0 0 -93px;
                }
                span {
                    transform: rotate(-45deg);
                    font: 24px/26px "Liberation Sans", sans-serif;
                    color: rgba(120, 120, 120, 0.25);
                }
            </style>
            <div>${marks}</div>
        `;
    }
}

customElements.define('desk-top', DeskTop);
customElements.define('work-area', WorkArea);
customElements.define('date-note', DateNote);
customElements.define('app-menu', AppMenu);
customElements.define('quote-table', QuoteTable);
customElements.define('push-button', PushButton);
customElements.define('group-box', GroupBox);
customElements.define('pick-dialog', PickDialog);
customElements.define('ime-bar', ImeBar);
customElements.define('sector-tabs', SectorTabs);
customElements.define('index-bar', IndexBar);
customElements.define('task-bar', TaskBar);
customElements.define('water-mark', WaterMark);
</script>
</body>
</html>
